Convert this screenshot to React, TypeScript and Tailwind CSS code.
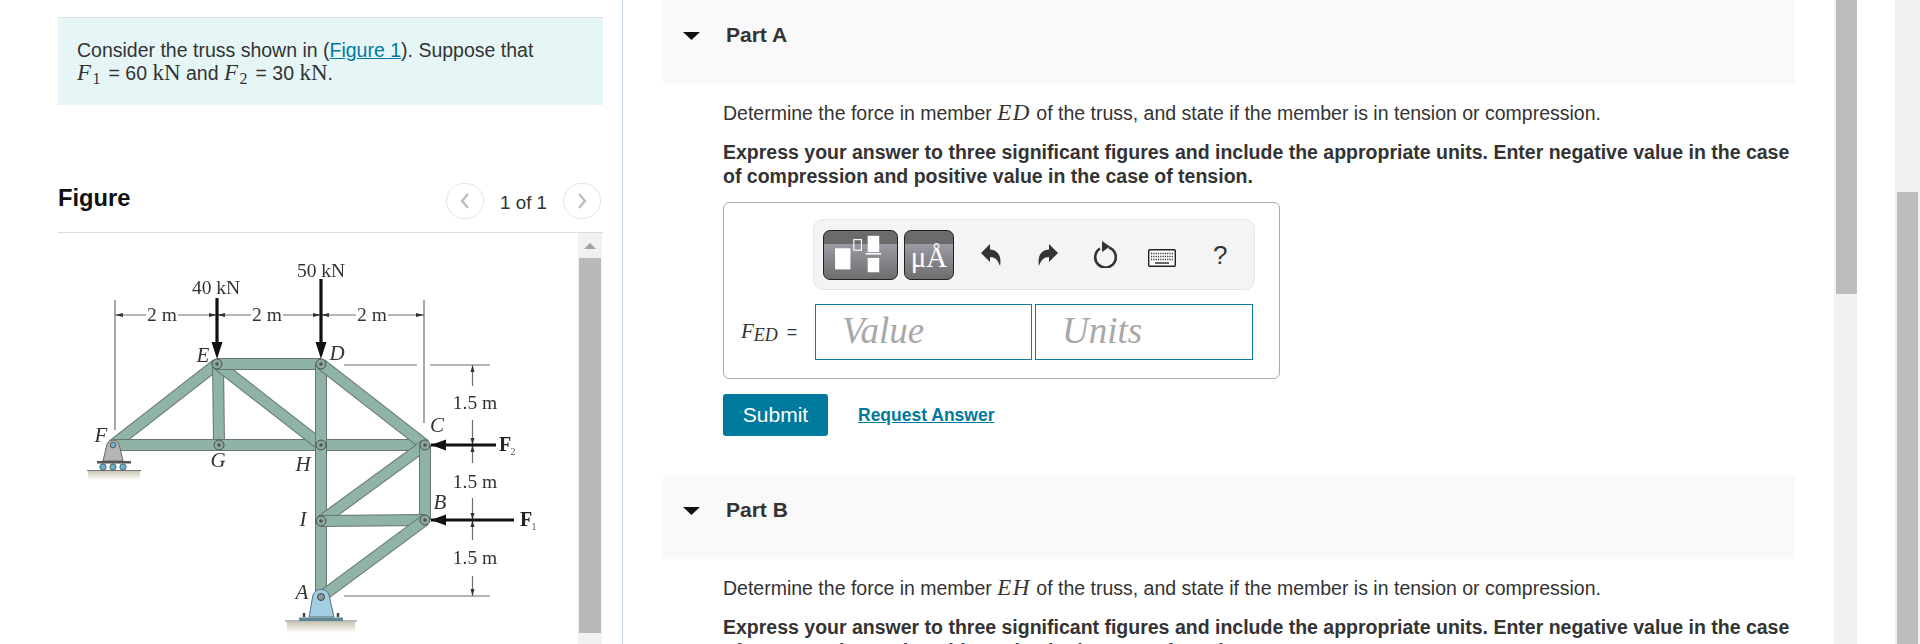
import React from 'react';

const bars: number[][] = [
    [113, 445, 217, 364],
    [218, 364, 219, 445],
    [113, 445, 425, 445],
    [217, 364, 321, 445],
    [217, 364, 321, 364],
    [321, 364, 321, 597],
    [321, 364, 425, 445],
    [425, 445, 321, 521],
    [425, 445, 425, 520],
    [321, 521, 425, 520],
    [425, 520, 321, 597],
];

const pins: number[][] = [
    [217, 364], [321, 364], [219, 445], [321, 445], [425, 445], [425, 520], [321, 521],
];

const labels = [
    { t: 'F', x: 101, y: 442 },
    { t: 'E', x: 203, y: 362 },
    { t: 'D', x: 337, y: 360 },
    { t: 'G', x: 218, y: 467 },
    { t: 'H', x: 303, y: 471 },
    { t: 'I', x: 303, y: 526 },
    { t: 'A', x: 302, y: 599 },
    { t: 'C', x: 437, y: 432 },
    { t: 'B', x: 440, y: 509 },
];

const dims = [
    { t: '2 m', x: 162, y: 321 },
    { t: '2 m', x: 267, y: 321 },
    { t: '2 m', x: 372, y: 321 },
    { t: '40 kN', x: 216, y: 294 },
    { t: '50 kN', x: 321, y: 277 },
    { t: '1.5 m', x: 475, y: 409 },
    { t: '1.5 m', x: 475, y: 488 },
    { t: '1.5 m', x: 475, y: 564 },
];

const TrussFigure: React.FC = () => (
    <svg viewBox="58 233 520 411" className="h-[411px] w-[520px] blur-[0.5px]">
        <defs>
            <linearGradient id="shade" x1="0" y1="0" x2="0" y2="1">
                <stop offset="0" stopColor="#c9c7b2" />
                <stop offset="1" stopColor="#ffffff" />
            </linearGradient>
        </defs>

        {/* dimension lines */}
        <g stroke="#6f6f6f" strokeWidth="1.2" fill="none">
            <path d="M115 300V430M424 300V423" />
            <path d="M115 315H146M178 315H251M283 315H356M388 315H424" />
            <path d="M344 365H417M430 365H490M344 596H490" />
            <path d="M472.5 365V386M472.5 420V463M472.5 498V540M472.5 576V596" />
        </g>
        <g fill="#333">
            <path d="M115 315l8-2v4zM217 315l-8-2v4zM217 315l8-2v4zM321 315l-8-2v4zM321 315l8-2v4zM424 315l-8-2v4z" />
            <path d="M472.5 365l-2 7h4zM472.5 445l-2-7h4zM472.5 445l-2 7h4zM472.5 520l-2-7h4zM472.5 520l-2 7h4zM472.5 596l-2-7h4z" />
        </g>

        {/* ground and supports */}
        <rect x="88" y="471" width="52" height="9" fill="url(#shade)" />
        <rect x="287" y="622" width="68" height="11" fill="url(#shade)" />
        <path d="M87 470.5H141M285 621H357" stroke="#777" strokeWidth="1" />

        {bars.map((b, i) => (
            <g key={i}>
                <line x1={b[0]} y1={b[1]} x2={b[2]} y2={b[3]} stroke="#66756f" strokeWidth="12" />
                <line x1={b[0]} y1={b[1]} x2={b[2]} y2={b[3]} stroke="#8fb3a5" strokeWidth="10" />
            </g>
        ))}

        <path d="M103 461L107 444A6.5 6.5 0 0 1 119 444L123 461Z" fill="#b3b5b8" stroke="#666" />
        <circle cx="113" cy="445" r="2.8" fill="#6cb4d2" stroke="#444" strokeWidth="0.8" />
        <rect x="97" y="461" width="34" height="2.5" fill="#555" />
        {[103, 113, 123].map(x => (
            <circle key={x} cx={x} cy="467" r="3.2" fill="#62b3cf" stroke="#444" strokeWidth="0.7" />
        ))}

        <path d="M309 617L313 595A8.5 8.5 0 0 1 329 595L334 617Z" fill="#a2cde2" stroke="#56707c" />
        <circle cx="321" cy="597" r="3.5" fill="#8a9a9a" stroke="#444" />
        <rect x="299" y="617.5" width="44" height="3.5" fill="#5f8794" />
        <path d="M304 617v-4M338 617v-4" stroke="#444" strokeWidth="2.5" />

        {pins.map((p, i) => (
            <g key={i}>
                <circle cx={p[0]} cy={p[1]} r="5" fill="#8aa99c" stroke="#4a4f4d" />
                <circle cx={p[0]} cy={p[1]} r="1.8" fill="#555" />
            </g>
        ))}

        {/* loads */}
        <g stroke="#111" strokeWidth="3.2">
            <path d="M217 298V348M321 279V348M431 445H496M431 520H514" />
        </g>
        <g fill="#111">
            <path d="M217 359l-5.5-17h11zM321 359l-5.5-17h11zM431 445l15-5.5v11zM431 520l15-5.5v11z" />
        </g>

        <g fontFamily="'Liberation Serif', serif" fill="#333" textAnchor="middle">
            {dims.map((d, i) => (
                <text key={i} x={d.x} y={d.y} fontSize="19.5">{d.t}</text>
            ))}
            {labels.map(l => (
                <text key={l.t} x={l.x} y={l.y} fontSize="21" fontStyle="italic">{l.t}</text>
            ))}
            <text x="505" y="451" fontSize="20" fontWeight="bold" fill="#222">F</text>
            <text x="513" y="455" fontSize="10" fill="#555">2</text>
            <text x="526" y="526" fontSize="20" fontWeight="bold" fill="#222">F</text>
            <text x="534" y="530" fontSize="10" fill="#555">1</text>
        </g>
    </svg>
);

const Math: React.FC<{ children: React.ReactNode }> = ({ children }) => (
    <span className="font-['Liberation_Serif',serif] text-[23px] italic leading-[0] tracking-[1.5px]">{children}</span>
);

const Roman: React.FC<{ children: React.ReactNode }> = ({ children }) => (
    <span className="font-['Liberation_Serif',serif] text-[23px] leading-[0]">{children}</span>
);

const Sub: React.FC<{ children: React.ReactNode }> = ({ children }) => (
    <sub className="font-['Liberation_Serif',serif] text-[16px] leading-[0]">{children}</sub>
);

const PartHeader: React.FC<{ title: string }> = ({ title }) => (
    <div className="flex h-[84px] bg-[#f9f9f9] pt-[24px]">
        <svg viewBox="0 0 17 8" className="ml-[20px] mt-[8px] h-[8px] w-[17px] shrink-0">
            <polygon points="0,0 17,0 8.5,8" fill="#111" />
        </svg>
        <span className="ml-[26px] text-[21px] font-bold leading-[22px] text-[#333]">{title}</span>
    </div>
);

const Toolbar: React.FC = () => (
    <div className="ml-[89px] mt-[16px] flex h-[71px] w-[442px] items-center rounded-[10px] border border-[#e5e5e5] bg-[#f4f4f4] pl-[9px]">
        <div className="h-[50px] w-[75px] shrink-0 rounded-[7px] border border-[#222] bg-[linear-gradient(#6b6b6b_0,#6b6b6b_28%,#9b99a2_28%,#6e6e70_100%)]">
            <svg viewBox="0 0 75 50" className="h-full w-full">
                <rect x="11" y="18" width="16" height="22" fill="#fff" />
                <rect x="30.5" y="9" width="8" height="11" fill="none" stroke="#fff" strokeWidth="1.2" />
                <rect x="45" y="5" width="12" height="17" fill="#fff" />
                <rect x="43" y="23" width="16" height="1.6" fill="#fff" />
                <rect x="45" y="28" width="12" height="15" fill="#fff" />
            </svg>
        </div>
        <div className="ml-[6px] flex h-[50px] w-[50px] shrink-0 items-end justify-center rounded-[7px] border border-[#222] bg-[linear-gradient(#6b6b6b_0,#6b6b6b_28%,#9b99a2_28%,#6e6e70_100%)] pb-[7px] font-['Liberation_Serif',serif] text-[29px] leading-[29px] text-white">
            μÅ
        </div>
        <svg viewBox="0 0 20 23" className="ml-[27px] h-[23px] w-[20px] shrink-0">
            <path d="M0 10L9 1V6.5C16 7 21 12 19 23C17 17 14 14 9 14V19Z" fill="#333" />
        </svg>
        <svg viewBox="0 0 20 23" className="ml-[37px] h-[23px] w-[20px] shrink-0">
            <path d="M20 10L11 1V6.5C4 7 -1 12 1 23C3 17 6 14 11 14V19Z" fill="#333" />
        </svg>
        <svg viewBox="0 0 24 27" className="ml-[35px] h-[27px] w-[24px] shrink-0">
            <path d="M7 7.5A10.3 10.3 0 1 0 16 6.5" fill="none" stroke="#333" strokeWidth="2.6" />
            <path d="M9 0L17 5.5L9 11Z" fill="#333" />
        </svg>
        <svg viewBox="0 0 28 18" className="ml-[31px] mt-[6px] h-[18px] w-[28px] shrink-0">
            <rect x="0.7" y="0.7" width="26.6" height="16.6" rx="1" fill="#fff" stroke="#222" strokeWidth="1.4" />
            <path d="M3 4.5H25M3 7.5H25M3 10.5H25" stroke="#333" strokeWidth="1.5" strokeDasharray="1.2 1.1" />
            <path d="M7 14H21" stroke="#333" strokeWidth="1.5" />
        </svg>
        <span className="ml-[37px] text-[26px] leading-none text-[#333]">?</span>
    </div>
);

const AnswerBox: React.FC = () => (
    <div className="mt-[14px] h-[177px] w-[557px] rounded-[6px] border border-[#aaa]">
        <Toolbar />
        <div className="mt-[14px] flex items-center">
            <span className="ml-[17px] flex w-[74px] items-baseline font-['Liberation_Serif',serif] text-[21px] text-[#333]">
                <i>F</i>
                <i className="relative top-[3px] text-[18px]">ED</i>
                <span className="ml-[9px] font-['Liberation_Sans',sans-serif] text-[18px]">=</span>
            </span>
            <div className="flex h-[56px] w-[217px] items-center border border-[#0e7c9c] pb-[3px] pl-[26px] font-['Liberation_Serif',serif] text-[37px] italic text-[#a8a8a8]">
                Value
            </div>
            <div className="ml-[3px] flex h-[56px] w-[218px] items-center border border-[#0e7c9c] pb-[3px] pl-[26px] font-['Liberation_Serif',serif] text-[37px] italic text-[#a8a8a8]">
                Units
            </div>
        </div>
    </div>
);

const PartBody: React.FC<{ member: string }> = ({ member }) => (
    <div className="pl-[60px] pr-[4px] text-[#333]">
        <p className="mt-[18px] text-[19.5px] leading-[23px]">
            Determine the force in member <Math>{member}</Math> of the truss, and state if the member is in tension or compression.
        </p>
        <p className="mt-[15px] text-[19.5px] font-bold leading-[24px]">
            Express your answer to three significant figures and include the appropriate units. Enter negative value in the case of compression and positive value in the case of tension.
        </p>
    </div>
);

export default function App() {
    return (
        <div className="flex h-[644px] w-[1920px] overflow-hidden bg-white font-['Liberation_Sans',sans-serif] text-[#333]">
            <section className="h-full w-[623px] shrink-0 border-r border-[#c5d5e3] pl-[58px] pr-[19px] pt-[17px]">
                <div className="h-[88px] border-t border-[#d9e2e2] bg-[#e6f6f7] px-[19px] pt-[21px] text-[19.5px] leading-[23px]">
                    Consider the truss shown in (<a className="text-[#007a9c] underline">Figure 1</a>). Suppose that
                    <br />
                    <Math>F</Math><Sub>1</Sub><span className="ml-[8px]">=</span> 60 <Roman>kN</Roman> and <Math>F</Math><Sub>2</Sub><span className="ml-[8px]">=</span> 30 <Roman>kN</Roman>.
                </div>

                <div className="mt-[73px] flex h-[55px] items-start justify-between border-b border-[#dcdcdc] pr-[2px]">
                    <h2 className="mt-[7px] text-[23.7px] font-bold leading-[26px] text-[#111]">Figure</h2>
                    <div className="mt-[5px] flex items-center">
                        <span className="flex h-[36px] w-[38px] items-center justify-center rounded-full border border-[#e5e5e5] text-[#bbb]">
                            <svg viewBox="0 0 10 18" className="h-[18px] w-[10px]"><path d="M8 2L2 9L8 16" fill="none" stroke="currentColor" strokeWidth="2.2" /></svg>
                        </span>
                        <span className="mx-[16px] h-[36px] text-[18.75px] leading-[40px]">1 of 1</span>
                        <span className="flex h-[36px] w-[38px] items-center justify-center rounded-full border border-[#e5e5e5] text-[#bbb]">
                            <svg viewBox="0 0 10 18" className="h-[18px] w-[10px]"><path d="M2 2L8 9L2 16" fill="none" stroke="currentColor" strokeWidth="2.2" /></svg>
                        </span>
                    </div>
                </div>

                <div className="flex h-[411px]">
                    <TrussFigure />
                    <div className="flex h-full w-[24px] flex-col items-center bg-[#f1f1f1] px-[1px]">
                        <svg viewBox="0 0 12 6" className="mt-[10px] h-[6px] w-[12px] shrink-0">
                            <polygon points="6,0 12,6 0,6" fill="#a3a3a3" />
                        </svg>
                        <div className="mt-[9px] h-[375px] w-full bg-[#b9b9b9]" />
                    </div>
                </div>
            </section>

            <main className="h-full w-[1211px] shrink-0 pl-[40px] pr-[39px]">
                <PartHeader title="Part A" />
                <PartBody member="ED" />
                <div className="pl-[60px]">
                    <AnswerBox />
                    <div className="mt-[15px] flex items-center">
                        <button className="h-[42px] w-[105px] rounded-[3px] bg-[#007a9c] text-[21px] text-white">Submit</button>
                        <a className="ml-[30px] text-[17.5px] font-bold text-[#007a9c] underline">Request Answer</a>
                    </div>
                </div>
                <div className="mt-[39px]">
                    <PartHeader title="Part B" />
                    <PartBody member="EH" />
                </div>
            </main>

            <div className="flex h-full w-[23px] shrink-0 flex-col bg-[#f1f1f1] pl-[2px]">
                <div className="h-[294px] w-[21px] bg-[#bdbdbd]" />
            </div>

            <div className="ml-[38px] flex h-full w-[25px] shrink-0 flex-col bg-[#f1f1f1] px-[2px] pt-[192px]">
                <div className="h-full w-full bg-[#bdbdbd]" />
            </div>
        </div>
    );
}
